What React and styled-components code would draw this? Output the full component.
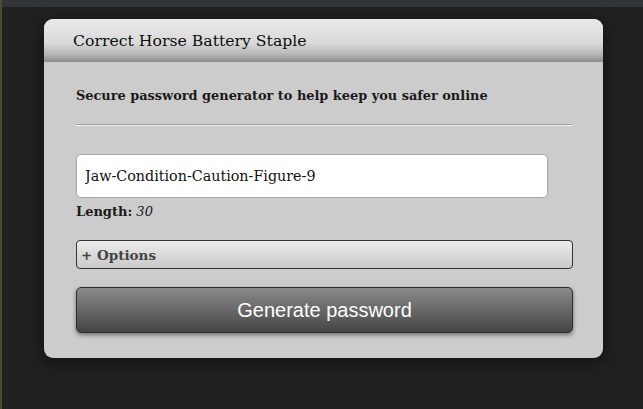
import React from 'react';
import styled, { createGlobalStyle } from 'styled-components';

const GlobalStyle = createGlobalStyle`
  html, body {
    margin: 0;
    padding: 0;
    background: #212121;
    height: 100%;
  }
  #root {
    min-height: 100%;
  }
`;

const Page = styled.div`
  min-height: 409px;
  background: #212121;
  border-left: 2px solid #4a4d2c;
  display: flex;
  flex-direction: column;
  font-family: "DejaVu Serif", "Liberation Serif", serif;
`;

const TopBar = styled.div`
  height: 7px;
  background: #333439;
`;

const Stage = styled.main`
  padding: 12px 0 0 42px;
`;

const Card = styled.section`
  width: 559px;
  height: 339px;
  background: #cccccc;
  border-radius: 9px;
  box-shadow: 0 4px 18px rgba(0, 0, 0, 0.55);
  overflow: hidden;
`;

const Header = styled.header`
  height: 43px;
  padding-left: 29px;
  display: flex;
  align-items: center;
  background: linear-gradient(to bottom, #e9e9e9 0%, #dadada 55%, #b9b9b9 80%, #8d8d8d 100%);
`;

const Title = styled.h1`
  margin: 0;
  font-size: 15.7px;
  font-weight: normal;
  color: #0d0d0d;
`;

const Body = styled.div`
  padding: 26px 31px 0 32px;
  display: flex;
  flex-direction: column;
`;

const Lead = styled.p`
  margin: 0;
  font-size: 12.9px;
  font-weight: bold;
  color: #1a1a1a;
`;

const Rule = styled.hr`
  margin: 21px 0 28px;
  border: 0;
  border-top: 1px solid #9c9c9c;
  border-bottom: 1px solid #f2f2f2;
`;

const PasswordField = styled.input`
  box-sizing: border-box;
  width: 472px;
  height: 44px;
  padding: 0 8px;
  border: 1px solid #a6a6a6;
  border-radius: 5px;
  background: #fff;
  font-family: inherit;
  font-size: 14.3px;
  color: #111;
  outline: none;
`;

const LengthLine = styled.div`
  margin-top: 6px;
  font-size: 13px;
  color: #1a1a1a;

  b { font-weight: bold; }
  i { font-style: italic; }
`;

const OptionsButton = styled.button`
  box-sizing: border-box;
  margin-top: 21px;
  width: 497px;
  height: 29px;
  padding: 0 4px;
  text-align: left;
  border: 1.5px solid #333;
  border-radius: 4px;
  background: linear-gradient(to bottom, #ececec, #c9c9c9);
  font-family: inherit;
  font-size: 13.5px;
  font-weight: bold;
  color: #444;
  cursor: pointer;
`;

const GenerateButton = styled.button`
  box-sizing: border-box;
  margin-top: 18px;
  width: 497px;
  height: 46px;
  border: 1px solid #2e2e2e;
  border-radius: 5px;
  background: linear-gradient(to bottom, #8a8a8a, #454545);
  box-shadow: 0 2px 4px rgba(0, 0, 0, 0.45);
  font-family: "Liberation Sans", Arial, sans-serif;
  font-size: 20px;
  color: #fff;
  cursor: pointer;
`;

export default function App() {
  return (
    <>
      <GlobalStyle />
      <Page>
        <TopBar />
        <Stage>
          <Card>
            <Header>
              <Title>Correct Horse Battery Staple</Title>
            </Header>
            <Body>
              <Lead>Secure password generator to help keep you safer online</Lead>
              <Rule />
              <PasswordField readOnly value="Jaw-Condition-Caution-Figure-9" />
              <LengthLine>
                <b>Length:</b> <i>30</i>
              </LengthLine>
              <div>
                <OptionsButton>+ Options</OptionsButton>
              </div>
              <div>
                <GenerateButton>Generate password</GenerateButton>
              </div>
            </Body>
          </Card>
        </Stage>
      </Page>
    </>
  );
}
